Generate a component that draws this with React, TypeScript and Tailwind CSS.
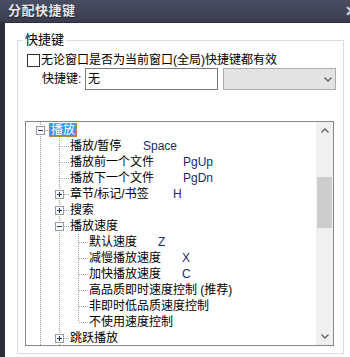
import React from "react";

type Row = {
    level: number;
    text: string;
    keyName?: string;
    keyW?: number;
    box?: "+" | "-";
    last?: boolean;
    selected?: boolean;
};

const rows: Row[] = [
    { level: 0, text: "播放", box: "-", selected: true },
    { level: 1, text: "播放/暂停", keyName: "Space", keyW: 73 },
    { level: 1, text: "播放前一个文件", keyName: "PgUp", keyW: 113 },
    { level: 1, text: "播放下一个文件", keyName: "PgDn", keyW: 113 },
    { level: 1, text: "章节/标记/书签", keyName: "H", keyW: 103, box: "+" },
    { level: 1, text: "搜索", box: "+" },
    { level: 1, text: "播放速度", box: "-" },
    { level: 2, text: "默认速度", keyName: "Z", keyW: 69 },
    { level: 2, text: "减慢播放速度", keyName: "X", keyW: 93 },
    { level: 2, text: "加快播放速度", keyName: "C", keyW: 93 },
    { level: 2, text: "高品质即时速度控制 (推荐)" },
    { level: 2, text: "非即时低品质速度控制" },
    { level: 2, text: "不使用速度控制", last: true },
    { level: 1, text: "跳跃播放", box: "+" },
];

// one 19x16 slot of tree connector lines
function Cell({ up, down, h, box }: { up?: boolean; down?: boolean; h?: boolean; box?: "+" | "-" }) {
    const dot = { stroke: "#a3a3a3", strokeWidth: 1, strokeDasharray: "1 1" };
    return (
        <svg width="19" height="16" viewBox="0 0 19 16" shapeRendering="crispEdges" className="shrink-0">
            {up && <line x1="9.5" y1="0" x2="9.5" y2="8" {...dot} />}
            {down && <line x1="9.5" y1="8" x2="9.5" y2="16" {...dot} />}
            {h && <line x1="10" y1="8.5" x2="19" y2="8.5" {...dot} />}
            {box && (
                <g>
                    <rect x="5.5" y="4.5" width="8" height="8" fill="#fafafa" stroke="#9a9a9a" />
                    <line x1="7" y1="8.5" x2="12" y2="8.5" stroke="#1f2f6e" />
                    {box === "+" && <line x1="9.5" y1="6" x2="9.5" y2="11" stroke="#1f2f6e" />}
                </g>
            )}
        </svg>
    );
}

function TreeRow({ row }: { row: Row }) {
    const ancestors = Array.from({ length: row.level }, (_, i) => i);
    return (
        <div className="flex h-4 items-center whitespace-nowrap text-[12px] leading-4 text-black">
            {ancestors.map((i) => (
                <Cell key={i} up down />
            ))}
            <Cell up down={!row.last} h box={row.box} />
            {row.selected ? (
                <span className="ml-[-1px] h-[14px] border border-dotted border-[#c98a3e] bg-[#3399ff] px-px leading-[12px] text-white">
                    {row.text}
                </span>
            ) : (
                <span className="ml-px" style={row.keyW ? { width: row.keyW, display: "inline-block" } : undefined}>
                    {row.text}
                </span>
            )}
            {row.keyName && <span className="text-[#1d2a66]">{row.keyName}</span>}
        </div>
    );
}

function Chevron({ up }: { up?: boolean }) {
    return (
        <svg width="8" height="5" viewBox="0 0 8 5">
            <path d={up ? "M0.5 4.5 L4 1 L7.5 4.5" : "M0.5 0.5 L4 4 L7.5 0.5"} fill="none" stroke="#606060" strokeWidth="1.3" />
        </svg>
    );
}

export default function App() {
    return (
        <div className="flex h-[357px] w-[350px] flex-col overflow-hidden bg-white font-['Liberation_Sans','Noto_Sans_CJK_SC',sans-serif]">
            <div className="flex h-[23px] shrink-0 items-center justify-between overflow-hidden border-b border-[#2a2c3a] bg-gradient-to-b from-[#4b4e63] to-[#3a3c4f] pl-[8px]">
                <span className="text-[13px] font-bold tracking-[0.5px] text-[#e6e6ea] [text-shadow:0_1px_1px_#1a1a22]">分配快捷键</span>
                <span className="mr-[-7px] text-[14px] font-bold text-[#d8d8de]">✕</span>
            </div>
            <div className="flex flex-1">
                <div className="w-[5px] bg-[#2d2e3b]" />
                <div className="flex-1">
                    <fieldset className="ml-[12px] mt-[9px] w-[327px] border border-[#dcdcdc] pb-[7px]">
                        <legend className="ml-[5px] px-[2px] text-[13px] leading-4 text-black">快捷键</legend>
                        <div className="mt-[4px] flex h-4 items-center pl-[9px] text-[12px] text-black">
                            <span className="mr-[1px] h-[13px] w-[13px] border border-[#333333] bg-white" />
                            <span>无论窗口是否为当前窗口(全局)快捷键都有效</span>
                        </div>
                        <div className="flex h-[22px] items-center pl-[24px] text-[12px] text-black">
                            <span className="w-[43px]">快捷键:</span>
                            <div className="flex h-[22px] w-[133px] items-center border border-[#7a7a7a] bg-white pl-[2px]">无</div>
                            <div className="ml-[5px] flex h-[22px] w-[113px] items-center justify-end border border-[#adadad] bg-[#e3e3e3] pr-[3px]">
                                <Chevron />
                            </div>
                        </div>
                        <div className="ml-[7px] mt-[31px] flex h-[225px] w-[309px] border border-[#828790] bg-white">
                            <div className="flex-1 overflow-hidden pl-[5px]">
                                {rows.map((r, i) => (
                                    <TreeRow key={i} row={r} />
                                ))}
                            </div>
                            <div className="flex w-[17px] flex-col bg-[#f0f0f0]">
                                <div className="flex h-[17px] items-center justify-center">
                                    <Chevron up />
                                </div>
                                <div className="h-[38px]" />
                                <div className="mx-px h-[51px] bg-[#cdcdcd]" />
                                <div className="flex-1" />
                                <div className="flex h-[17px] items-center justify-center">
                                    <Chevron />
                                </div>
                            </div>
                        </div>
                    </fieldset>
                </div>
            </div>
        </div>
    );
}
